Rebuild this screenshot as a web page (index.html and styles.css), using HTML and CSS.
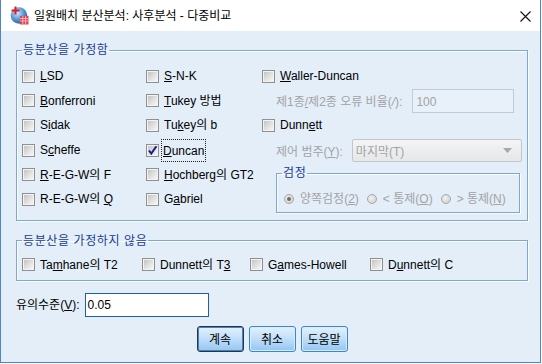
FILE: index.html
```html
<!DOCTYPE html>
<html lang="ko">
<head>
<meta charset="utf-8">
<link rel="stylesheet" href="styles.css">
</head>
<body>
<div class="window">
  <div class="titlebar">
    <svg class="appicon" width="19" height="19" viewBox="0 0 19 19">
      <defs>
        <radialGradient id="gl" cx="0.4" cy="0.35" r="0.7">
          <stop offset="0" stop-color="#cfe6fb"/>
          <stop offset="0.55" stop-color="#5b9ad6"/>
          <stop offset="1" stop-color="#25589a"/>
        </radialGradient>
      </defs>
      <circle cx="9" cy="9.5" r="8.3" fill="url(#gl)"/>
      <rect x="4.5" y="0.5" width="2" height="8" fill="#d8202a"/>
      <rect x="1.5" y="3.5" width="8" height="2" fill="#d8202a"/>
      <rect x="10" y="10" width="8.5" height="8.5" fill="#e0404e"/>
      <path d="M10 12.5h8.5M10 15h8.5M12.8 10v8.5M15.6 10v8.5" stroke="#f6c2c8" stroke-width="0.9"/>
    </svg>
    <span class="title">일원배치 분산분석: 사후분석 - 다중비교</span>
    <svg class="close" width="11" height="11" viewBox="0 0 11 11">
      <path d="M0.5 0.5L10.5 10.5M10.5 0.5L0.5 10.5" stroke="#111" stroke-width="1.1"/>
    </svg>
  </div>

  <div class="content">
    <fieldset class="group g1">
      <legend>등분산을 가정함</legend>
      <div class="grid">
        <label class="cb"><span class="box"></span><span><u>L</u>SD</span></label>
        <label class="cb"><span class="box"></span><span><u>S</u>-N-K</span></label>
        <label class="cb"><span class="box"></span><span><u>W</u>aller-Duncan</span></label>

        <label class="cb"><span class="box"></span><span><u>B</u>onferroni</span></label>
        <label class="cb"><span class="box"></span><span><u>T</u>ukey 방법</span></label>
        <div class="sub">
          <span class="dis">제1종<u>/</u>제2종 오류 비율(<i>/</i>):</span>
          <span class="numbox">100</span>
        </div>

        <label class="cb"><span class="box"></span><span>S<u>i</u>dak</span></label>
        <label class="cb"><span class="box"></span><span>Tu<u>k</u>ey의 b</span></label>
        <label class="cb"><span class="box"></span><span>Dunn<u>e</u>tt</span></label>

        <label class="cb"><span class="box"></span><span>S<u>c</u>heffe</span></label>
        <label class="cb"><span class="box checked"><svg width="13" height="13" viewBox="0 0 13 13"><path d="M3 6.5L5.3 9.6L10.4 2.2" fill="none" stroke="#1a1a8c" stroke-width="2"/></svg></span><span class="focus"><u>D</u>uncan</span></label>
        <div class="sub">
          <span class="dis">제어 범주(<u>Y</u>):</span>
          <span class="combo"><span>마지막(T)</span><svg width="9" height="5" viewBox="0 0 9 5"><path d="M0 0H9L4.5 5Z" fill="#a8a8a8"/></svg></span>
        </div>

        <label class="cb"><span class="box"></span><span><u>R</u>-E-G-W의 F</span></label>
        <label class="cb"><span class="box"></span><span><u>H</u>ochberg의 GT2</span></label>
        <fieldset class="group test">
          <legend>검정</legend>
          <div class="radios">
            <span class="rb"><span class="radio on"></span><span class="dis">양쪽검정(<u>2</u>)</span></span>
            <span class="rb"><span class="radio"></span><span class="dis">&lt; 통제(<u>O</u>)</span></span>
            <span class="rb"><span class="radio"></span><span class="dis">&gt; 통제(<u>N</u>)</span></span>
          </div>
        </fieldset>

        <label class="cb"><span class="box"></span><span>R-E-G-W의 <u>Q</u></span></label>
        <label class="cb"><span class="box"></span><span>G<u>a</u>briel</span></label>
      </div>
    </fieldset>

    <fieldset class="group g2">
      <legend>등분산을 가정하지 않음</legend>
      <div class="row">
        <label class="cb w1"><span class="box"></span><span>Ta<u>m</u>hane의 T2</span></label>
        <label class="cb w2"><span class="box"></span><span>Dunnett의 T<u>3</u></span></label>
        <label class="cb w3"><span class="box"></span><span>G<u>a</u>mes-Howell</span></label>
        <label class="cb"><span class="box"></span><span>D<u>u</u>nnett의 C</span></label>
      </div>
    </fieldset>

    <div class="sig">
      <span>유의수준(<u>V</u>):</span>
      <span class="sigbox">0.05</span>
    </div>

    <div class="buttons">
      <button class="btn default">계속</button>
      <button class="btn">취소</button>
      <button class="btn">도움말</button>
    </div>
  </div>
</div>
</body>
</html>
```

FILE: styles.css
```css
* { box-sizing: border-box; }
html, body { margin: 0; padding: 0; background: #ffffff; }
body {
  font-family: "Liberation Sans", "Noto Sans CJK KR", sans-serif;
  font-size: 12px;
  color: #000;
}
.window {
  width: 541px;
  height: 363px;
  border: 1px solid #4d86c8;
  border-top: 0;
  background: #e3eef9;
  display: flex;
  flex-direction: column;
}
.titlebar {
  height: 31px;
  background: #ffffff;
  display: flex;
  align-items: center;
  padding-left: 9px;
}
.appicon { flex: none; }
.title {
  margin-left: 5px;
  font-size: 12px;
  line-height: 16px;
  flex: 1;
  margin-top: 1px;
}
.close { margin-right: 9px; margin-top: 1px; }

.content {
  padding: 0 12px 0 15px;
  display: flex;
  flex-direction: column;
}
.group {
  margin: 0;
  border: 1px solid #7ea7d8;
  box-shadow: 1px 1px 0 #fbfdff, inset 1px 1px 0 #fbfdff;
  min-width: 0;
}
.group > legend {
  color: #213d93;
  font-size: 12px;
  line-height: 14px;
  padding: 0 1px;
  letter-spacing: 0.6px;
}
.g1 {
  margin-top: 12px;
  width: 512px;
  padding: 7px 4px 8px 5px;
}
.grid {
  display: grid;
  grid-template-columns: 124px 116px 1fr;
  grid-template-rows: repeat(6, 24.6px);
}
.cb {
  display: flex;
  align-items: center;
  gap: 5px;
  line-height: 14px;
  white-space: nowrap;
}
.box {
  flex: none;
  width: 13px;
  height: 13px;
  border: 1px solid #8f9090;
  background: linear-gradient(135deg, #bdbdbd 0%, #dcdcdc 45%, #fbfbfb 100%);
  box-shadow: inset 0 0 0 1px #f3f3f3;
  position: relative;
}
.box.checked svg { position: absolute; left: -1px; top: -1px; }
.focus {
  outline: 1px dotted #222;
  outline-offset: 0;
  margin-left: -2px;
  padding: 4px 1px 3px 1px;
}
.sub {
  display: flex;
  align-items: center;
  padding-left: 14px;
  white-space: nowrap;
}
.dis { color: #a3a3a3; }
.dis i { font-style: italic; }
.numbox {
  margin-left: 10px;
  width: 102px;
  height: 24px;
  border: 1px solid #c3cad3;
  background: #e8f0f9;
  color: #a3a3a3;
  padding: 5px 3px;
  line-height: 14px;
}
.combo {
  margin-left: 9px;
  width: 170px;
  height: 23px;
  border: 1px solid #c3c6cb;
  border-radius: 2px;
  background: linear-gradient(#f3f4f5, #e6e7e9);
  color: #a3a3a3;
  display: flex;
  align-items: center;
  justify-content: space-between;
  padding: 0 9px 0 3px;
}
.test {
  grid-column: 3;
  grid-row: span 2;
  align-self: start;
  margin: 4px 0 0 14px;
  width: 244px;
  padding: 12px 2px 6px 5px;
}
.radios {
  display: flex;
  align-items: center;
  gap: 8px;
  padding-left: 2px;
}
.rb {
  display: flex;
  align-items: center;
  gap: 6px;
  line-height: 14px;
  white-space: nowrap;
}
.radio {
  width: 10px;
  height: 10px;
  border-radius: 50%;
  border: 1px solid #a8a8a8;
  background: radial-gradient(circle at 40% 40%, #f2f2f2, #c9c9c9);
  position: relative;
}
.radio.on::after {
  content: "";
  position: absolute;
  left: 2px;
  top: 2px;
  width: 4px;
  height: 4px;
  border-radius: 50%;
  background: #6d6d6d;
}
.g2 {
  margin-top: 13px;
  width: 512px;
  padding: 5px 4px 3px 5px;
}
.row {
  display: flex;
  height: 24px;
  align-items: center;
}
.w1 { width: 120px; }
.w2 { width: 108px; }
.w3 { width: 120px; }
.sig {
  margin-top: 12px;
  display: flex;
  align-items: center;
  line-height: 14px;
}
.sigbox {
  margin-left: 5px;
  width: 124px;
  height: 24px;
  border: 1px solid #1f5ea8;
  background: #fff;
  padding: 4px 2px;
  line-height: 14px;
}
.buttons {
  margin-top: 9px;
  display: flex;
  justify-content: center;
  gap: 5px;
}
.btn {
  font-family: "Liberation Sans", "Noto Sans CJK KR", sans-serif;
  font-size: 12px;
  width: 47px;
  height: 26px;
  padding: 0;
  border: 1px solid #3a86d4;
  border-radius: 3px;
  background: linear-gradient(#e4f1fc 0%, #c3e0f9 45%, #93c6f2 100%);
  box-shadow: inset 0 0 0 1px #d9ecfb;
  color: #000;
}
.btn.default {
  border-color: #333;
  box-shadow: inset 0 0 0 1px #3a86d4;
}
```
